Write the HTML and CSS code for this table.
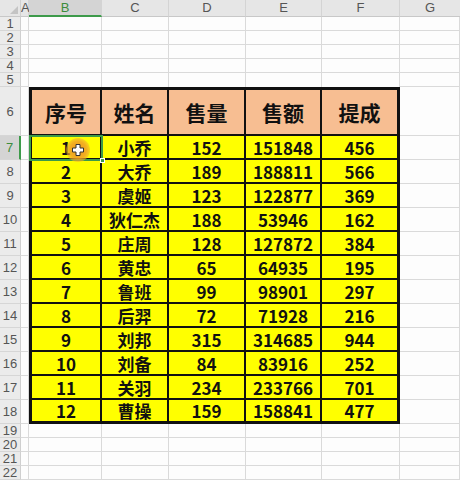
FILE: index.html
```html
<!DOCTYPE html>
<html lang="zh">
<head>
<meta charset="utf-8">
<link rel="stylesheet" href="styles.css">
</head>
<body>
<div class="sheet">
  <div class="corner"><span class="tri"></span></div>
  <div class="ch ch-a">A</div>
  <div class="ch sel">B</div>
  <div class="ch">C</div>
  <div class="ch">D</div>
  <div class="ch">E</div>
  <div class="ch">F</div>
  <div class="ch ch-g">G</div>

  <div class="rh">1</div><div class="c"></div><div class="c"></div><div class="c"></div><div class="c"></div><div class="c"></div><div class="c"></div><div class="c"></div>
  <div class="rh">2</div><div class="c"></div><div class="c"></div><div class="c"></div><div class="c"></div><div class="c"></div><div class="c"></div><div class="c"></div>
  <div class="rh">3</div><div class="c"></div><div class="c"></div><div class="c"></div><div class="c"></div><div class="c"></div><div class="c"></div><div class="c"></div>
  <div class="rh">4</div><div class="c"></div><div class="c"></div><div class="c"></div><div class="c"></div><div class="c"></div><div class="c"></div><div class="c"></div>
  <div class="rh">5</div><div class="c"></div><div class="c nb"></div><div class="c nb"></div><div class="c nb"></div><div class="c nb"></div><div class="c nb"></div><div class="c"></div>

  <div class="rh">6</div><div class="c"></div><div class="t th tl">序号</div><div class="t th">姓名</div><div class="t th">售量</div><div class="t th">售额</div><div class="t th tr">提成</div><div class="c"></div>

  <div class="rh rsel">7</div><div class="c"></div><div class="t tl">1</div><div class="t">小乔</div><div class="t">152</div><div class="t">151848</div><div class="t tr">456</div><div class="c"></div>
  <div class="rh">8</div><div class="c"></div><div class="t tl">2</div><div class="t">大乔</div><div class="t">189</div><div class="t">188811</div><div class="t tr">566</div><div class="c"></div>
  <div class="rh">9</div><div class="c"></div><div class="t tl">3</div><div class="t">虞姬</div><div class="t">123</div><div class="t">122877</div><div class="t tr">369</div><div class="c"></div>
  <div class="rh">10</div><div class="c"></div><div class="t tl">4</div><div class="t">狄仁杰</div><div class="t">188</div><div class="t">53946</div><div class="t tr">162</div><div class="c"></div>
  <div class="rh">11</div><div class="c"></div><div class="t tl">5</div><div class="t">庄周</div><div class="t">128</div><div class="t">127872</div><div class="t tr">384</div><div class="c"></div>
  <div class="rh">12</div><div class="c"></div><div class="t tl">6</div><div class="t">黄忠</div><div class="t">65</div><div class="t">64935</div><div class="t tr">195</div><div class="c"></div>
  <div class="rh">13</div><div class="c"></div><div class="t tl">7</div><div class="t">鲁班</div><div class="t">99</div><div class="t">98901</div><div class="t tr">297</div><div class="c"></div>
  <div class="rh">14</div><div class="c"></div><div class="t tl">8</div><div class="t">后羿</div><div class="t">72</div><div class="t">71928</div><div class="t tr">216</div><div class="c"></div>
  <div class="rh">15</div><div class="c"></div><div class="t tl">9</div><div class="t">刘邦</div><div class="t">315</div><div class="t">314685</div><div class="t tr">944</div><div class="c"></div>
  <div class="rh">16</div><div class="c"></div><div class="t tl">10</div><div class="t">刘备</div><div class="t">84</div><div class="t">83916</div><div class="t tr">252</div><div class="c"></div>
  <div class="rh">17</div><div class="c"></div><div class="t tl">11</div><div class="t">关羽</div><div class="t">234</div><div class="t">233766</div><div class="t tr">701</div><div class="c"></div>
  <div class="rh">18</div><div class="c"></div><div class="t tl tb">12</div><div class="t tb">曹操</div><div class="t tb">159</div><div class="t tb">158841</div><div class="t tr tb">477</div><div class="c"></div>

  <div class="rh">19</div><div class="c"></div><div class="c"></div><div class="c"></div><div class="c"></div><div class="c"></div><div class="c"></div><div class="c"></div>
  <div class="rh">20</div><div class="c"></div><div class="c"></div><div class="c"></div><div class="c"></div><div class="c"></div><div class="c"></div><div class="c"></div>
  <div class="rh">21</div><div class="c"></div><div class="c"></div><div class="c"></div><div class="c"></div><div class="c"></div><div class="c"></div><div class="c"></div>
  <div class="rh">22</div><div class="c"></div><div class="c"></div><div class="c"></div><div class="c"></div><div class="c"></div><div class="c"></div><div class="c"></div>

  <div class="selection"><span class="handle"></span></div>
  <div class="cursor">
    <svg width="12" height="12" viewBox="0 0 12 12"><path d="M4 0.5h4v3.5h3.5v4h-3.5v3.5h-4v-3.5h-3.5v-4h3.5z" fill="#fff" stroke="#333" stroke-width="1"/></svg>
  </div>
</div>
</body>
</html>
```

FILE: styles.css
```css
* { box-sizing: border-box; }
html, body { margin: 0; padding: 0; background: #fdfdfd; }
.sheet {
  position: relative;
  width: 460px;
  height: 480px;
  overflow: hidden;
  display: grid;
  grid-template-columns: 21px 8px 73px 67px 77px 76px 78px 60px;
  grid-template-rows: 17px repeat(5, 14px) 49px repeat(12, 24px) repeat(4, 14px);
  font-family: "Liberation Sans", Arial, sans-serif;
}
.corner {
  background: #e6e6e6;
  border-bottom: 1px solid #c8c8c8;
  border-right: 1px solid #d0d0d0;
  position: relative;
}
.tri {
  position: absolute;
  right: 2px;
  bottom: 2px;
  width: 0;
  height: 0;
  border-left: 8px solid transparent;
  border-bottom: 8px solid #c4c4c4;
}
.ch {
  background: #e6e6e6;
  border-bottom: 1px solid #c8c8c8;
  border-right: 1px solid #d4d4d4;
  color: #555;
  font-size: 13px;
  display: flex;
  align-items: center;
  justify-content: center;
  padding-bottom: 1px;
}
.ch-a { justify-content: flex-start; padding-left: 0; overflow: visible; }
.ch-g { border-right: none; }
.ch.sel {
  background: #d4d4d4;
  color: #3c8c3c;
  border-bottom: 2px solid #3d9a4a;
}
.rh {
  background: #ebebeb;
  border-bottom: 1px solid #d6d6d6;
  border-right: 1px solid #cfcfcf;
  color: #555;
  font-size: 13px;
  display: flex;
  align-items: center;
  justify-content: center;
}
.rh.rsel {
  background: #d4d4d4;
  color: #3c8c3c;
  border-right: 2px solid #3d9a4a;
}
.c {
  background: #fdfdfd;
  border-right: 1px solid #dadada;
  border-bottom: 1px solid #dadada;
}
.c.nb { border-bottom: none; }
.t {
  background: #ffff00;
  border-right: 2px solid #111;
  border-bottom: 2px solid #111;
  font-family: "Noto Sans CJK SC", sans-serif;
  font-weight: 700;
  font-size: 17px;
  color: #111;
  display: flex;
  align-items: center;
  justify-content: center;
  line-height: 1;
}
.t.tl { border-left: 3px solid #111; }
.t.tr { border-right: 3px solid #111; }
.t.tb { border-bottom: 3px solid #111; }
.t.th {
  background: #f7be92;
  border-top: 3px solid #111;
  font-size: 21px;
}
.selection {
  position: absolute;
  left: 29px;
  top: 135px;
  width: 74px;
  height: 26px;
  border: 2px solid #3d9a4a;
  pointer-events: none;
}
.handle {
  position: absolute;
  right: -4px;
  bottom: -4px;
  width: 5px;
  height: 5px;
  background: #3d9a4a;
  border: 1px solid #fff;
}
.cursor {
  position: absolute;
  left: 66px;
  top: 138px;
  width: 24px;
  height: 24px;
  border-radius: 50%;
  background: radial-gradient(circle, rgba(238,150,30,0.95) 0%, rgba(240,160,40,0.85) 50%, rgba(245,190,60,0.35) 80%, rgba(255,220,80,0) 100%);
  display: flex;
  align-items: center;
  justify-content: center;
}
.cursor svg { display: block; }
```
